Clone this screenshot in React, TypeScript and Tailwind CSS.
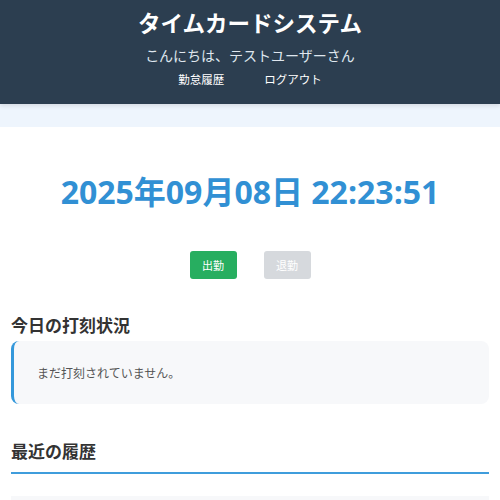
const jp = "font-['Noto_Sans_CJK_JP',sans-serif]";

const Header = () => (
    <header className="bg-[#2c3e50] text-white text-center pt-[7px] h-[104px] shadow-[0_2px_4px_rgba(0,0,0,0.1)] relative">
        <h1 className="text-[22.5px] font-bold leading-[30px]">タイムカードシステム</h1>
        <p className="text-[14px] leading-[20px] mt-[8px] text-[#dfe6ee]">こんにちは、テストユーザーさん</p>
        <nav className="flex justify-center gap-[40px] mt-[6px] text-[11.5px] leading-[16px]">
            <a className="text-white">勤怠履歴</a>
            <a className="text-white">ログアウト</a>
        </nav>
    </header>
);

const App = () => {
    return (
        <div className={`min-h-[500px] bg-[#eef5fd] ${jp}`}>
            <Header />
            <main className="mt-[23px] bg-white px-[11px] pt-[45px] pb-10">
                {/* Clock */}
                <div className="text-center text-[32px] font-bold leading-[40px] text-[#3190d4] font-['Open_Sans','Noto_Sans_CJK_JP',sans-serif]">
                    2025年09月08日 22:23:51
                </div>

                {/* Punch buttons */}
                <div className="flex justify-center gap-[27px] mt-[39px]">
                    <button className="w-[47px] h-[28px] rounded-[3px] bg-[#27ae60] text-white text-[11px]">出勤</button>
                    <button className="w-[47px] h-[28px] rounded-[3px] bg-[#d6d9dd] text-white text-[11px]" disabled>退勤</button>
                </div>

                {/* Today status */}
                <h2 className="mt-[34px] text-[17px] font-bold leading-[24px] text-[#333]">今日の打刻状況</h2>
                <div className="mt-[4px] h-[63px] flex items-center bg-[#f7f8fa] border-l-[3px] border-[#3498db] rounded-[8px] pl-[23px] text-[12px] text-[#555]">
                    まだ打刻されていません。
                </div>

                {/* Recent history */}
                <h2 className="mt-[35px] text-[17px] font-bold leading-[24px] text-[#333] pb-[9px] border-b-2 border-[#3f9ddc]">最近の履歴</h2>
                <div className="mt-[22px] h-[40px] bg-[#f7f8fa]"></div>
            </main>
        </div>
    );
};

export default App;
